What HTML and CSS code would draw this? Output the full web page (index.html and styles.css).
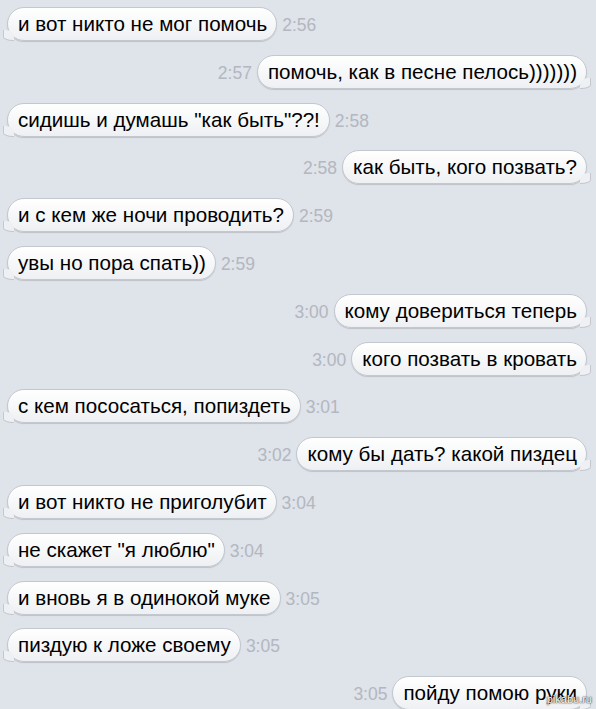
FILE: index.html
```html
<!DOCTYPE html>
<html lang="ru">
<head>
  <meta charset="UTF-8" />
  <meta name="viewport" content="width=device-width, initial-scale=1" />
  <title>Чат</title>
  <link rel="stylesheet" href="styles.css">
</head>
<body>
  <div class="chat">
    <div class="row in"><div class="bubble">и вот никто не мог помочь</div><span class="time">2:56</span></div>
    <div class="row out"><span class="time">2:57</span><div class="bubble">помочь, как в песне пелось)))))))</div></div>
    <div class="row in"><div class="bubble">сидишь и думашь "как быть"??!</div><span class="time">2:58</span></div>
    <div class="row out"><span class="time">2:58</span><div class="bubble">как быть, кого позвать?</div></div>
    <div class="row in"><div class="bubble">и с кем же ночи проводить?</div><span class="time">2:59</span></div>
    <div class="row in"><div class="bubble">увы но пора спать))</div><span class="time">2:59</span></div>
    <div class="row out"><span class="time">3:00</span><div class="bubble">кому довериться теперь</div></div>
    <div class="row out"><span class="time">3:00</span><div class="bubble">кого позвать в кровать</div></div>
    <div class="row in"><div class="bubble">с кем пососаться, попиздеть</div><span class="time">3:01</span></div>
    <div class="row out"><span class="time">3:02</span><div class="bubble">кому бы дать? какой пиздец</div></div>
    <div class="row in"><div class="bubble">и вот никто не приголубит</div><span class="time">3:04</span></div>
    <div class="row in"><div class="bubble">не скажет "я люблю"</div><span class="time">3:04</span></div>
    <div class="row in"><div class="bubble">и вновь я в одинокой муке</div><span class="time">3:05</span></div>
    <div class="row in"><div class="bubble">пиздую к ложе своему</div><span class="time">3:05</span></div>
    <div class="row out"><span class="time">3:05</span><div class="bubble">пойду помою руки</div></div>
  </div>
  <span class="watermark">pikabu.ru</span>
</body>
</html>
```

FILE: styles.css
```css
* {
  margin: 0;
  padding: 0;
  box-sizing: border-box;
}

body, html {
  height: 100%;
  overflow: hidden;
}

body {
  background: #dfe3ea;
  font-family: "Liberation Sans", Arial, sans-serif;
  position: relative;
}

.chat {
  display: flex;
  flex-direction: column;
  gap: 13.8px;
  padding: 7px 9px 0 7px;
}

.row {
  display: flex;
  align-items: baseline;
  gap: 5px;
}

.row.out {
  justify-content: flex-end;
}

.bubble {
  position: relative;
  height: 34px;
  line-height: 32px;
  padding: 0 9px 0 10px;
  font-size: 20.6px;
  color: #000;
  background: linear-gradient(#ffffff, #eef0f3);
  border: 1px solid #c3c8cf;
  border-radius: 17px;
  box-shadow: 0 1px 1px rgba(0, 0, 0, 0.15);
  white-space: nowrap;
}

.row.in .bubble::after,
.row.out .bubble::after {
  content: "";
  position: absolute;
  bottom: -1px;
  width: 10px;
  height: 10px;
  background: #eef0f3;
  border-bottom: 1px solid #c3c8cf;
}

.row.in .bubble::after {
  left: -5px;
  border-left: 1px solid #c3c8cf;
  border-bottom-left-radius: 10px 4px;
  border-top-right-radius: 8px;
}

.row.out .bubble::after {
  right: -5px;
  border-right: 1px solid #c3c8cf;
  border-bottom-right-radius: 10px 4px;
  border-top-left-radius: 8px;
}

.time {
  font-size: 17.5px;
  color: #b3b7bf;
}

.watermark {
  position: absolute;
  right: 4px;
  bottom: 4px;
  font-size: 11px;
  color: #fff;
  text-shadow: 0 0 2px #333, 0 0 1px #000;
}
```
